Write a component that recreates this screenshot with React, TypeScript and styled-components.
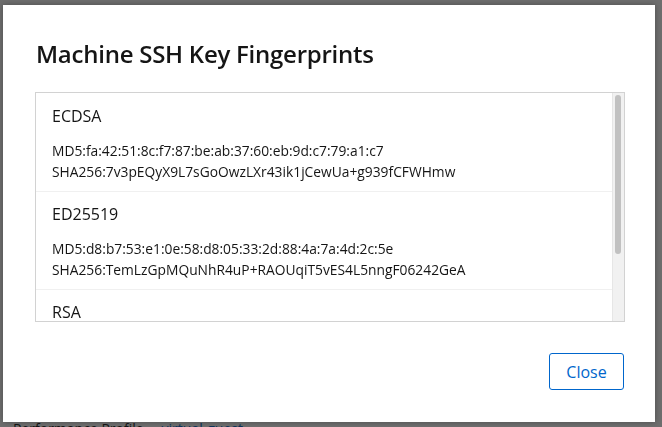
import React from "react";
import styled, { createGlobalStyle } from "styled-components";

const GlobalStyle = createGlobalStyle`
  html, body {
    margin: 0;
    padding: 0;
    width: 662px;
    height: 427px;
    overflow: hidden;
    background: #ffffff;
    font-family: "Open Sans", "Noto Sans", sans-serif;
  }
`;

const Page = styled.div`
  padding: 418px 13px 0;
  display: flex;
  gap: 18px;
  font-size: 14px;
  line-height: 21px;
`;

const PageLabel = styled.span`
  color: #151515;
`;

const PageLink = styled.span`
  color: #0066cc;
`;

const Backdrop = styled.div`
  position: fixed;
  inset: 0;
  background: rgba(21, 21, 21, 0.62);
  padding: 5px 5px 5px 3px;
  display: flex;
  align-items: flex-start;
`;

const Modal = styled.div`
  width: 652px;
  height: 417px;
  box-sizing: border-box;
  background: #ffffff;
  padding: 24px 30px 32px 32px;
  display: flex;
  flex-direction: column;
  box-shadow: 0 0 6px rgba(0, 0, 0, 0.3);
`;

const Title = styled.h1`
  margin: 9px 0 0 1px;
  font-size: 24px;
  font-weight: 580;
  line-height: 32px;
  color: #151515;
  letter-spacing: -0.25px;
`;

const ListBox = styled.div`
  margin-top: 22px;
  height: 230px;
  box-sizing: border-box;
  border: 1px solid #d2d2d2;
  display: flex;
  overflow: hidden;
`;

const Items = styled.div`
  flex: 1;
  padding-top: 1px;
  overflow: hidden;
`;

const ScrollTrack = styled.div`
  width: 12px;
  box-sizing: border-box;
  background: #f1f1f1;
  border-left: 1px solid #e6e6e6;
  padding: 2px 3px 0 2px;
`;

const ScrollThumb = styled.div`
  height: 159px;
  background: #c1c1c1;
  border-radius: 4px;
`;

const Item = styled.div`
  padding: 10px 16px 9px;
  border-bottom: 1px solid #f0f0f0;
`;

const KeyType = styled.div`
  font-size: 16px;
  line-height: 24px;
  color: #151515;
`;

const Fingerprint = styled.div`
  margin-top: 12px;
  font-size: 13.8px;
  line-height: 21px;
  color: #151515;
  white-space: nowrap;
`;

const Footer = styled.div`
  margin-top: auto;
  display: flex;
  justify-content: flex-end;
`;

const CloseButton = styled.button`
  width: 75px;
  height: 37px;
  box-sizing: border-box;
  border: 1px solid #0066cc;
  border-radius: 3px;
  background: #ffffff;
  color: #0066cc;
  font-family: inherit;
  font-size: 16px;
  margin-right: 1px;
  cursor: pointer;
`;

type Key = {
  type: string;
  md5: string;
  sha256: string;
};

const keys: Key[] = [
  {
    type: "ECDSA",
    md5: "MD5:fa:42:51:8c:f7:87:be:ab:37:60:eb:9d:c7:79:a1:c7",
    sha256: "SHA256:7v3pEQyX9L7sGoOwzLXr43ik1jCewUa+g939fCFWHmw",
  },
  {
    type: "ED25519",
    md5: "MD5:d8:b7:53:e1:0e:58:d8:05:33:2d:88:4a:7a:4d:2c:5e",
    sha256: "SHA256:TemLzGpMQuNhR4uP+RAOUqiT5vES4L5nngF06242GeA",
  },
  {
    type: "RSA",
    md5: "MD5:3c:4b:9a:21:7d:e0:5f:61:aa:18:c2:0b:94:e7:33:5d",
    sha256: "SHA256:Qm2rX8vLp0sK4nT7yB1eHcW9dJ6uF3aZgR5iN8oVtY",
  },
];

const App: React.FC = () => {
  return (
    <>
      <GlobalStyle />
      <Page>
        <PageLabel>Performance Profile</PageLabel>
        <PageLink>virtual-guest</PageLink>
      </Page>
      <Backdrop>
        <Modal>
          <Title>Machine SSH Key Fingerprints</Title>
          <ListBox>
            <Items>
              {keys.map((k) => (
                <Item key={k.type}>
                  <KeyType>{k.type}</KeyType>
                  <Fingerprint>
                    {k.md5}
                    <br />
                    {k.sha256}
                  </Fingerprint>
                </Item>
              ))}
            </Items>
            <ScrollTrack>
              <ScrollThumb />
            </ScrollTrack>
          </ListBox>
          <Footer>
            <CloseButton>Close</CloseButton>
          </Footer>
        </Modal>
      </Backdrop>
    </>
  );
};

export default App;
